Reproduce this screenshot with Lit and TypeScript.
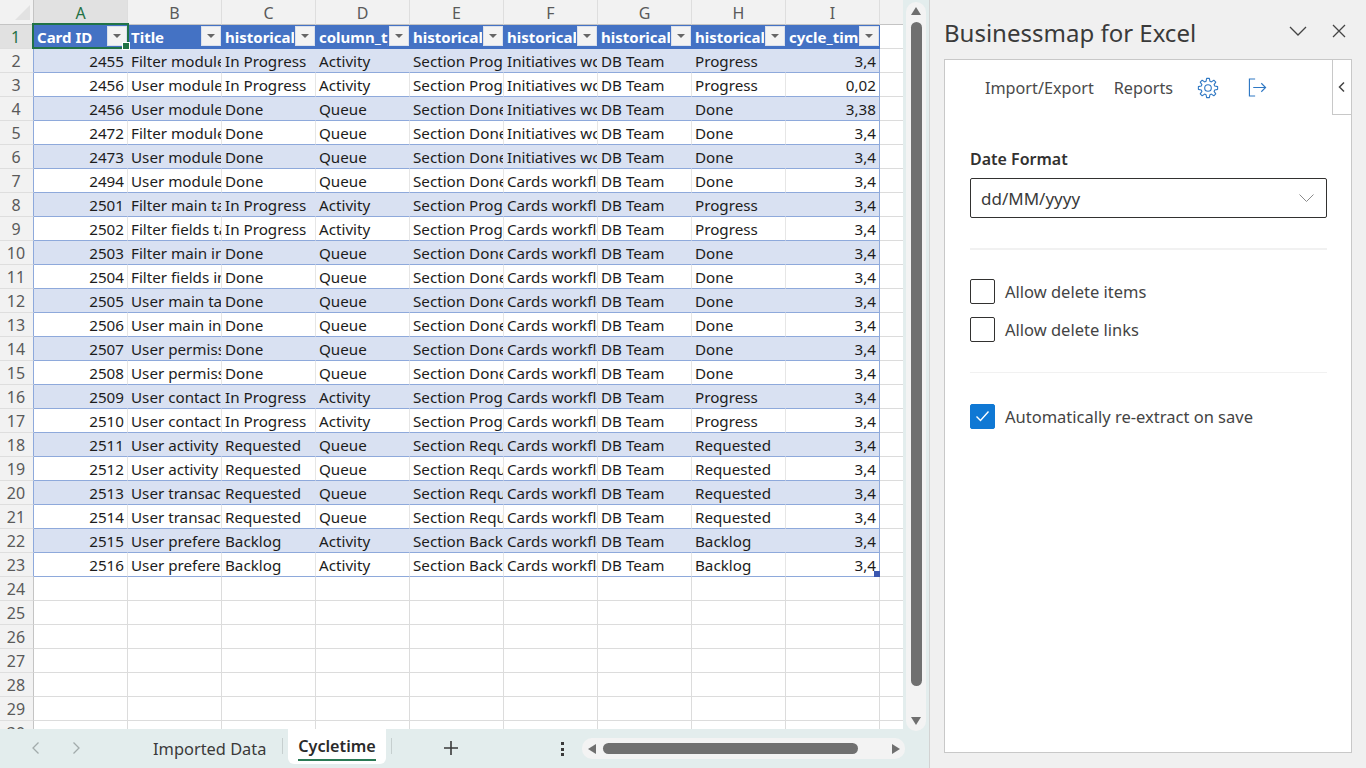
import { LitElement, html, css, svg } from "lit";
import { customElement } from "lit/decorators.js";
import { classMap } from "lit/directives/class-map.js";

const T: Record<string, string> = {
  P: "In Progress|Activity|Section Progress|Progress",
  D: "Done|Queue|Section Done|Done",
  R: "Requested|Queue|Section Requested|Requested",
  B: "Backlog|Activity|Section Backlog|Backlog",
};
const I = "Initiatives workflow";
const C = "Cards workflow";
const raw: [string, string, string, string, string][] = [
  ["2455", "Filter module tasks", "P", I, "3,4"],
  ["2456", "User module tasks", "P", I, "0,02"],
  ["2456", "User module tasks", "D", I, "3,38"],
  ["2472", "Filter module tasks", "D", I, "3,4"],
  ["2473", "User module tasks", "D", I, "3,4"],
  ["2494", "User module tasks", "D", C, "3,4"],
  ["2501", "Filter main table", "P", C, "3,4"],
  ["2502", "Filter fields table", "P", C, "3,4"],
  ["2503", "Filter main info", "D", C, "3,4"],
  ["2504", "Filter fields info", "D", C, "3,4"],
  ["2505", "User main table", "D", C, "3,4"],
  ["2506", "User main info", "D", C, "3,4"],
  ["2507", "User permissions", "D", C, "3,4"],
  ["2508", "User permissions", "D", C, "3,4"],
  ["2509", "User contacts", "P", C, "3,4"],
  ["2510", "User contacts", "P", C, "3,4"],
  ["2511", "User activity log", "R", C, "3,4"],
  ["2512", "User activity log", "R", C, "3,4"],
  ["2513", "User transactions", "R", C, "3,4"],
  ["2514", "User transactions", "R", C, "3,4"],
  ["2515", "User preferences", "B", C, "3,4"],
  ["2516", "User preferences", "B", C, "3,4"],
];
const COLS = ["A", "B", "C", "D", "E", "F", "G", "H", "I"];
const HEAD = ["Card ID", "Title", "historical_state", "column_type", "historical_section", "historical_workflow", "historical_team", "historical_name", "cycle_time"];

function gear() {
  const n = 8, cx = 12, cy = 12, pts: string[] = [];
  for (let i = 0; i < n; i++) {
    const a = (i / n) * Math.PI * 2;
    const w = Math.PI / n;
    const p = (r: number, t: number) => `${(cx + r * Math.cos(t)).toFixed(2)} ${(cy + r * Math.sin(t)).toFixed(2)}`;
    pts.push(`${i ? "L" : "M"}${p(7.6, a - w * 0.72)}`, `L${p(10.6, a - w * 0.36)}`, `L${p(10.6, a + w * 0.36)}`, `L${p(7.6, a + w * 0.72)}`);
  }
  return svg`<path d="${pts.join(" ")}Z" stroke-linejoin="round"/><circle cx="12" cy="12" r="3.6"/>`;
}

@customElement("app-root")
export class AppRoot extends LitElement {
  static styles = css`
    :host { display: block; width: 1366px; height: 768px; overflow: hidden; font-family: "Noto Sans", "Open Sans", sans-serif; color: #242424; }
    * { box-sizing: border-box; }
    .app { display: flex; width: 1366px; height: 768px; background: #f0f0f0; }
    .book { width: 930px; display: flex; flex-direction: column; background: #e3eded; border-right: 1px solid #d2d2d2; }
    .top { display: flex; height: 729px; }
    .gridwrap { width: 903px; height: 729px; overflow: hidden; position: relative; background: #fff; }
    .grid { display: grid; grid-template-columns: 34px repeat(9, 94px) 24px; grid-template-rows: 25px; grid-auto-rows: 24px; font-size: 15.2px; line-height: 24px; }
    .cell { border-right: 1px solid #dcdcdc; border-bottom: 1px solid #dcdcdc; padding: 0 3px; overflow: hidden; white-space: nowrap; background: #fff; color: #1c1c1c; }
    .colh { background: #f2f2f2; color: #5a5a5a; text-align: center; font-size: 16px; border-right-color: #dedede; border-bottom-color: #c4c4c4; line-height: 27px; }
    .colh.sel { background: #e1e1e1; color: #1f7145; border-bottom: 2px solid #217346; }
    .colh.end { border-right: 0; }
    .corner { background: #f2f2f2; border-bottom-color: #c4c4c4; border-right-color: #c4c4c4; position: relative; }
    .corner::after { content: ""; position: absolute; right: 3px; bottom: 4px; border-style: solid; border-width: 0 0 15px 15px; border-color: transparent transparent #e2e2e2 transparent; }
    .rowh { background: #f2f2f2; color: #5a5a5a; text-align: center; font-size: 16px; border-right: 1px solid #c4c4c4; border-bottom-color: #dedede; padding: 0 1px 0 0; line-height: 25px; }
    .rowh.sel { background: #e1e1e1; color: #1f7145; border-right: 2px solid #217346; }
    .rowh.intable { border-right-color: #8ea9db; }
    .th { background: #4472c4; color: #fff; font-weight: 700; font-size: 15px; border: 0; height: 24px; padding-right: 0; position: relative; line-height: 24px; }
    .th span.t { display: block; width: 69px; overflow: hidden; }
    .band { background: #d9e1f2; }
    .tb { border-bottom-color: #8ea9db; border-right-color: #e6e6e6; }
    .band.tb { border-right-color: #d9e1f2; }
    .last { border-right-color: #8ea9db !important; }
    .num { text-align: right; padding-right: 3px; }
    .fbtn { position: absolute; right: 1px; top: 1px; width: 20px; height: 20px; background: #f3f3f3; border: 1px solid #dbe1ec; display: flex; align-items: center; justify-content: center; }
    .fbtn::after { content: ""; border-style: solid; border-width: 4px 4px 0 4px; border-color: #666 transparent transparent transparent; }
    .selbox { position: absolute; left: 32px; top: 23px; width: 97px; height: 26px; border: 2px solid #217346; pointer-events: none; }
    .selbox::after { content: ""; position: absolute; right: -3px; bottom: -3px; width: 6px; height: 6px; background: #217346; border: 1px solid #fff; }
    .handle { position: absolute; left: 874px; top: 571px; width: 6px; height: 6px; background: #3b57b0; }

    .vs { width: 26px; padding: 2px 0 0 3px; background: #e3eded; }
    .vtrack { height: 729px; background: #f3f3f3; border-radius: 10px; display: flex; flex-direction: column; align-items: center; position: relative; z-index: 1; width: 20px; }
    .up { margin-top: 5px; border-style: solid; border-width: 0 5.5px 8px 5.5px; border-color: transparent transparent #6f6f6f transparent; }
    .vthumb { width: 11px; height: 664px; margin-top: 7px; border-radius: 6px; background: #707070; flex: none; }
    .down { margin-top: 31px; border-style: solid; border-width: 8px 5.5px 0 5.5px; border-color: #6f6f6f transparent transparent transparent; }

    .tabs { height: 38px; flex: none; display: flex; align-items: flex-start; position: relative; }
    .chev { width: 40px; height: 38px; display: flex; align-items: center; justify-content: center; }
    .chev svg { width: 12px; height: 16px; fill: none; stroke: #a2abab; stroke-width: 1.3; display: block; }
    .navs { display: flex; width: 96px; padding-left: 16px; flex: none; }
    .tab { font-size: 16.4px; line-height: 24px; padding: 8px 0 0 57px; color: #3a3a3a; width: 186px; flex: none; white-space: nowrap; }
    .sep { width: 1px; height: 16px; margin-top: 9px; background: #c6cfcf; flex: none; }
    .tabon { width: 98px; height: 35px; margin: 0 5px; flex: none; background: #fff; border-radius: 0 0 6px 6px; display: flex; flex-direction: column; align-items: center; font-size: 16.2px; font-weight: 600; line-height: 24px; padding-top: 5px; color: #2a2a2a; }
    .tabon i { display: block; width: 78px; height: 2px; background: #2a7a55; margin-top: 1px; flex: none; }
    .plus { width: 16px; height: 16px; margin: 11px 0 0 51px; flex: none; }
    .plus svg { display: block; stroke: #3a3a3a; stroke-width: 1.6; }
    .dots { margin: 13px 0 0 102px; width: 4px; height: 14px; flex: none; display: flex; flex-direction: column; justify-content: space-between; }
    .dots b { display: block; width: 3px; height: 3px; background: #3a3a3a; }
    .hs { margin: 9px 0 0 17px; width: 323px; height: 21px; flex: none; border-radius: 10px; background: #f3f3f3; display: flex; align-items: center; padding-left: 6px; }
    .l { border-style: solid; border-width: 5.5px 8px 5.5px 0; border-color: transparent #6f6f6f transparent transparent; }
    .hthumb { width: 255px; height: 11px; border-radius: 6px; background: #707070; margin-left: 7px; flex: none; }
    .r { margin-left: 34px; border-style: solid; border-width: 5.5px 0 5.5px 8px; border-color: transparent transparent transparent #6f6f6f; }

    .pane { flex: 1; display: flex; flex-direction: column; padding: 0 14px 15px 14px; }
    .phead { height: 59px; display: flex; align-items: center; flex: none; }
    .ptitle { flex: 1; font-size: 24px; color: #3a3a3a; line-height: 32px; padding-top: 7px; white-space: nowrap; }
    .picons { display: flex; gap: 25px; padding: 3px 6px 0 0; align-items: center; }
    .picons svg { display: block; fill: none; stroke: #444; stroke-width: 1.3; }
    .panel { flex: 1; background: #fff; border: 1px solid #c8c8c8; position: relative; padding: 0 24px 0 25px; }
    .flap { position: absolute; right: -1px; top: 0; width: 20px; height: 55px; background: #fff; border: 1px solid #c8c8c8; border-top: 0; display: flex; align-items: center; justify-content: center; }
    .flap svg { fill: none; stroke: #444; stroke-width: 1.5; display: block; }
    .nav { height: 55px; display: flex; align-items: center; padding-left: 15px; font-size: 16.2px; color: #4a4a4a; white-space: nowrap; }
    .nav span { margin-right: 20px; }
    .nav svg { display: block; fill: none; stroke: #2f78c4; stroke-width: 1.2; flex: none; }
    .gearbtn { margin: 0 29px 0 4px; }
    .lbl { margin-top: 32px; font-size: 16px; font-weight: 600; line-height: 24px; color: #323130; }
    .select { margin-top: 7px; height: 40px; border: 1px solid #323130; border-radius: 2px; display: flex; align-items: center; justify-content: space-between; padding: 0 12px 0 10px; font-size: 17px; color: #3a3a3a; }
    .select svg { fill: none; stroke: #8a8a8a; stroke-width: 1; display: block; }
    .div { height: 2px; background: #f1f1f1; margin-top: 30px; }
    .div.thin { height: 1px; margin-top: 0; }
    .check { display: flex; align-items: center; gap: 10px; height: 26px; font-size: 16.5px; color: #444; white-space: nowrap; }
    .box { width: 25px; height: 25px; flex: none; border: 1px solid #323130; border-radius: 2px; background: #fff; display: flex; align-items: center; justify-content: center; }
    .box.on { background: #0f78d4; border-color: #0f78d4; }
    .box svg { fill: none; stroke: #fff; stroke-width: 1.4; display: block; }
    .g1 { padding: 28px 0 30px; display: flex; flex-direction: column; gap: 12px; }
    .g2 { padding-top: 30px; }
  `;

  render() {
    const rowh = (n: number, sel = false, intable = false) => html`<div class=${classMap({ cell: true, rowh: true, sel, intable })}>${n}</div>`;
    return html`<div class="app">
      <div class="book">
        <div class="top">
          <div class="gridwrap">
            <div class="grid">
              <div class="cell corner"></div>
              ${COLS.map((c, i) => html`<div class="cell colh ${i === 0 ? "sel" : ""}">${c}</div>`)}
              <div class="cell colh end"></div>

              ${rowh(1, true)}
              ${HEAD.map((h) => html`<div class="cell th"><span class="t">${h}</span><span class="fbtn"></span></div>`)}
              <div class="cell"></div>

              ${raw.map((r, i) => {
                const [st, ty, se, nm] = T[r[2]].split("|");
                const vals = [r[0], r[1], st, ty, se, r[3], "DB Team", nm, r[4]];
                const band = i % 2 === 0;
                return html`${rowh(i + 2, false, true)}
                  ${vals.map((v, j) => html`<div class=${classMap({ cell: true, tb: true, band, num: j === 0 || j === 8, last: j === 8 })}>${v}</div>`)}
                  <div class="cell"></div>`;
              })}

              ${[24, 25, 26, 27, 28, 29, 30].map((n) => html`${rowh(n)}
                ${COLS.map(() => html`<div class="cell"></div>`)}
                <div class="cell"></div>`)}
            </div>
            <div class="selbox"></div>
            <div class="handle"></div>
          </div>
          <div class="vs">
            <div class="vtrack">
              <div class="up"></div>
              <div class="vthumb"></div>
              <div class="down"></div>
            </div>
          </div>
        </div>
        <div class="tabs">
          <div class="navs">
            <div class="chev"><svg viewBox="0 0 12 16"><path d="M8.5 2.5 3 8l5.5 5.5"/></svg></div>
            <div class="chev"><svg viewBox="0 0 12 16"><path d="M3.5 2.5 9 8l-5.5 5.5"/></svg></div>
          </div>
          <div class="tab">Imported Data</div>
          <div class="sep"></div>
          <div class="tabon">Cycletime<i></i></div>
          <div class="sep"></div>
          <div class="plus"><svg width="16" height="16" viewBox="0 0 16 16"><path d="M8 1v14M1 8h14"/></svg></div>
          <div class="dots"><b></b><b></b><b></b></div>
          <div class="hs">
            <div class="l"></div>
            <div class="hthumb"></div>
            <div class="r"></div>
          </div>
        </div>
      </div>
      <div class="pane">
        <div class="phead">
          <div class="ptitle">Businessmap for Excel</div>
          <div class="picons">
            <svg width="18" height="10" viewBox="0 0 18 10"><path d="M1 1l8 8 8-8"/></svg>
            <svg width="14" height="14" viewBox="0 0 14 14"><path d="M1 1l12 12M13 1 1 13"/></svg>
          </div>
        </div>
        <div class="panel">
          <div class="flap"><svg width="8" height="12" viewBox="0 0 8 12"><path d="M6 1.5 1.5 6 6 10.5"/></svg></div>
          <div class="nav">
            <span>Import/Export</span><span>Reports</span>
            <svg class="gearbtn" width="22" height="22" viewBox="0 0 24 24">${gear()}</svg>
            <svg width="19" height="19" viewBox="0 0 20 20"><path d="M7.5 1H1.5v18h6M5.5 10h13M14 5.5l4.5 4.5-4.5 4.5"/></svg>
          </div>
          <div class="lbl">Date Format</div>
          <div class="select">dd/MM/yyyy
            <svg width="15" height="8" viewBox="0 0 15 8"><path d="M.5.5l7 7 7-7"/></svg>
          </div>
          <div class="div"></div>
          <div class="g1">
            <div class="check"><span class="box"></span>Allow delete items</div>
            <div class="check"><span class="box"></span>Allow delete links</div>
          </div>
          <div class="div thin"></div>
          <div class="g2">
            <div class="check"><span class="box on"><svg width="15" height="12" viewBox="0 0 15 12"><path d="M1.5 6.5 5.5 10.5 13.5 1.5"/></svg></span>Automatically re-extract on save</div>
          </div>
        </div>
      </div>
    </div>`;
  }
}
